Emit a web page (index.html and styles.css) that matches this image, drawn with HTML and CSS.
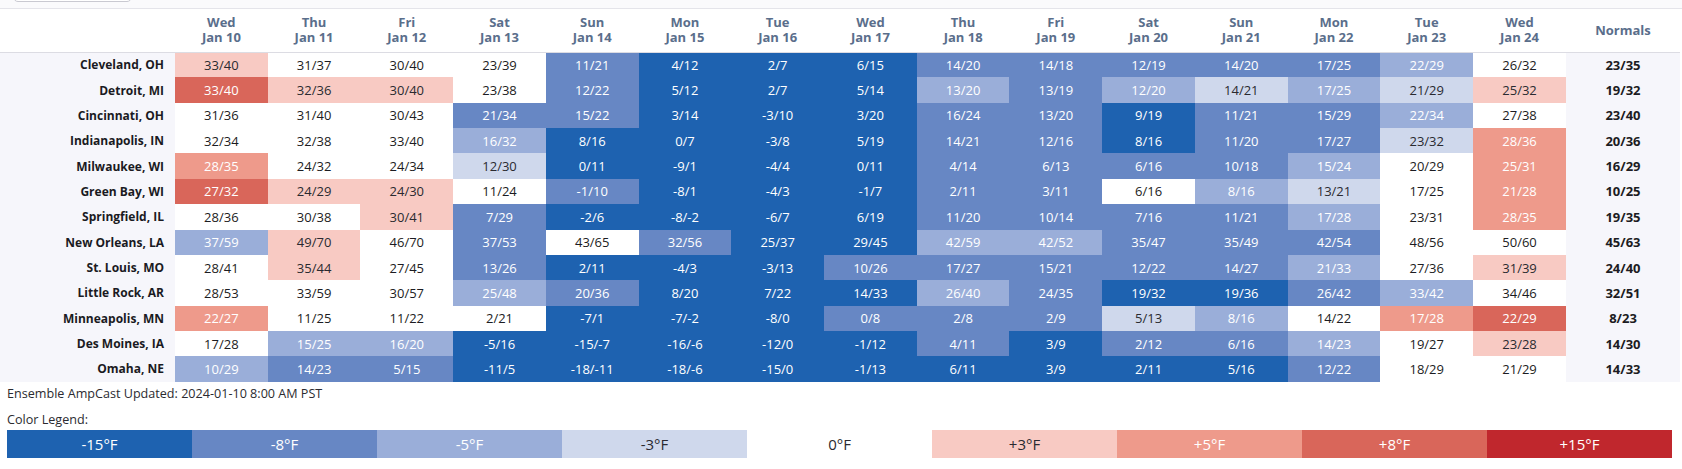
FILE: index.html
```html
<!DOCTYPE html>
<html lang="en">
<head>
<meta charset="utf-8">
<title>Ensemble AmpCast</title>
<link rel="stylesheet" href="styles.css">
</head>
<body>
<div class="toolbar"><div class="select"></div></div>
<table class="grid">
  <colgroup><col class="c-label"><col span="15"><col class="c-norm"></colgroup>
  <thead>
    <tr>
      <th></th>
      <th>Wed<br>Jan 10</th><th>Thu<br>Jan 11</th><th>Fri<br>Jan 12</th><th>Sat<br>Jan 13</th><th>Sun<br>Jan 14</th>
      <th>Mon<br>Jan 15</th><th>Tue<br>Jan 16</th><th>Wed<br>Jan 17</th><th>Thu<br>Jan 18</th><th>Fri<br>Jan 19</th>
      <th>Sat<br>Jan 20</th><th>Sun<br>Jan 21</th><th>Mon<br>Jan 22</th><th>Tue<br>Jan 23</th><th>Wed<br>Jan 24</th>
      <th>Normals</th>
    </tr>
  </thead>
  <tbody>
    <tr><th>Cleveland, OH</th>
      <td class="p3">33/40</td><td>31/37</td><td>30/40</td><td>23/39</td><td class="d8">11/21</td><td class="d15">4/12</td><td class="d15">2/7</td><td class="d15">6/15</td><td class="d8">14/20</td><td class="d8">14/18</td><td class="d8">12/19</td><td class="d8">14/20</td><td class="d8">17/25</td><td class="d5">22/29</td><td>26/32</td>
      <td class="norm">23/35</td></tr>
    <tr><th>Detroit, MI</th>
      <td class="p8">33/40</td><td class="p3">32/36</td><td class="p3">30/40</td><td>23/38</td><td class="d8">12/22</td><td class="d15">5/12</td><td class="d15">2/7</td><td class="d15">5/14</td><td class="d5">13/20</td><td class="d8">13/19</td><td class="d5">12/20</td><td class="d3">14/21</td><td class="d5">17/25</td><td class="d3">21/29</td><td class="p3">25/32</td>
      <td class="norm">19/32</td></tr>
    <tr><th>Cincinnati, OH</th>
      <td>31/36</td><td>31/40</td><td>30/43</td><td class="d8">21/34</td><td class="d8">15/22</td><td class="d15">3/14</td><td class="d15">-3/10</td><td class="d15">3/20</td><td class="d8">16/24</td><td class="d8">13/20</td><td class="d15">9/19</td><td class="d8">11/21</td><td class="d8">15/29</td><td class="d5">22/34</td><td>27/38</td>
      <td class="norm">23/40</td></tr>
    <tr><th>Indianapolis, IN</th>
      <td>32/34</td><td>32/38</td><td>33/40</td><td class="d5">16/32</td><td class="d15">8/16</td><td class="d15">0/7</td><td class="d15">-3/8</td><td class="d15">5/19</td><td class="d8">14/21</td><td class="d8">12/16</td><td class="d15">8/16</td><td class="d8">11/20</td><td class="d8">17/27</td><td class="d3">23/32</td><td class="p5">28/36</td>
      <td class="norm">20/36</td></tr>
    <tr><th>Milwaukee, WI</th>
      <td class="p5">28/35</td><td>24/32</td><td>24/34</td><td class="d3">12/30</td><td class="d15">0/11</td><td class="d15">-9/1</td><td class="d15">-4/4</td><td class="d15">0/11</td><td class="d8">4/14</td><td class="d8">6/13</td><td class="d8">6/16</td><td class="d8">10/18</td><td class="d5">15/24</td><td>20/29</td><td class="p5">25/31</td>
      <td class="norm">16/29</td></tr>
    <tr><th>Green Bay, WI</th>
      <td class="p8">27/32</td><td class="p3">24/29</td><td class="p3">24/30</td><td>11/24</td><td class="d8">-1/10</td><td class="d15">-8/1</td><td class="d15">-4/3</td><td class="d15">-1/7</td><td class="d8">2/11</td><td class="d8">3/11</td><td>6/16</td><td class="d5">8/16</td><td class="d3">13/21</td><td>17/25</td><td class="p5">21/28</td>
      <td class="norm">10/25</td></tr>
    <tr><th>Springfield, IL</th>
      <td>28/36</td><td>30/38</td><td class="p3">30/41</td><td class="d8">7/29</td><td class="d15">-2/6</td><td class="d15">-8/-2</td><td class="d15">-6/7</td><td class="d15">6/19</td><td class="d8">11/20</td><td class="d8">10/14</td><td class="d8">7/16</td><td class="d8">11/21</td><td class="d5">17/28</td><td>23/31</td><td class="p5">28/35</td>
      <td class="norm">19/35</td></tr>
    <tr><th>New Orleans, LA</th>
      <td class="d5">37/59</td><td class="p3">49/70</td><td>46/70</td><td class="d8">37/53</td><td>43/65</td><td class="d8">32/56</td><td class="d15">25/37</td><td class="d15">29/45</td><td class="d5">42/59</td><td class="d5">42/52</td><td class="d8">35/47</td><td class="d8">35/49</td><td class="d8">42/54</td><td>48/56</td><td>50/60</td>
      <td class="norm">45/63</td></tr>
    <tr><th>St. Louis, MO</th>
      <td>28/41</td><td class="p3">35/44</td><td>27/45</td><td class="d8">13/26</td><td class="d15">2/11</td><td class="d15">-4/3</td><td class="d15">-3/13</td><td class="d8">10/26</td><td class="d8">17/27</td><td class="d8">15/21</td><td class="d8">12/22</td><td class="d8">14/27</td><td class="d5">21/33</td><td>27/36</td><td class="p3">31/39</td>
      <td class="norm">24/40</td></tr>
    <tr><th>Little Rock, AR</th>
      <td>28/53</td><td>33/59</td><td>30/57</td><td class="d5">25/48</td><td class="d8">20/36</td><td class="d15">8/20</td><td class="d15">7/22</td><td class="d15">14/33</td><td class="d5">26/40</td><td class="d8">24/35</td><td class="d15">19/32</td><td class="d15">19/36</td><td class="d8">26/42</td><td class="d5">33/42</td><td>34/46</td>
      <td class="norm">32/51</td></tr>
    <tr><th>Minneapolis, MN</th>
      <td class="p5">22/27</td><td>11/25</td><td>11/22</td><td>2/21</td><td class="d15">-7/1</td><td class="d15">-7/-2</td><td class="d15">-8/0</td><td class="d8">0/8</td><td class="d8">2/8</td><td class="d8">2/9</td><td class="d3">5/13</td><td class="d5">8/16</td><td>14/22</td><td class="p5">17/28</td><td class="p8">22/29</td>
      <td class="norm">8/23</td></tr>
    <tr><th>Des Moines, IA</th>
      <td>17/28</td><td class="d5">15/25</td><td class="d5">16/20</td><td class="d15">-5/16</td><td class="d15">-15/-7</td><td class="d15">-16/-6</td><td class="d15">-12/0</td><td class="d15">-1/12</td><td class="d8">4/11</td><td class="d15">3/9</td><td class="d8">2/12</td><td class="d8">6/16</td><td class="d5">14/23</td><td>19/27</td><td class="p3">23/28</td>
      <td class="norm">14/30</td></tr>
    <tr><th>Omaha, NE</th>
      <td class="d5">10/29</td><td class="d8">14/23</td><td class="d8">5/15</td><td class="d15">-11/5</td><td class="d15">-18/-11</td><td class="d15">-18/-6</td><td class="d15">-15/0</td><td class="d15">-1/13</td><td class="d15">6/11</td><td class="d15">3/9</td><td class="d15">2/11</td><td class="d15">5/16</td><td class="d8">12/22</td><td>18/29</td><td>21/29</td>
      <td class="norm">14/33</td></tr>
  </tbody>
</table>
<div class="footer">
  <p class="updated">Ensemble AmpCast Updated: 2024-01-10 8:00 AM PST</p>
  <p class="legend-title">Color Legend:</p>
  <div class="legend">
    <div class="seg d15">-15°F</div>
    <div class="seg d8">-8°F</div>
    <div class="seg d5">-5°F</div>
    <div class="seg d3">-3°F</div>
    <div class="seg zero">0°F</div>
    <div class="seg p3">+3°F</div>
    <div class="seg p5">+5°F</div>
    <div class="seg p8">+8°F</div>
    <div class="seg p15">+15°F</div>
  </div>
</div>
</body>
</html>
```
FILE: styles.css
```css
* { box-sizing: border-box; }
html, body { margin: 0; padding: 0; background: #ffffff; }
body {
  font-family: "Open Sans", "Noto Sans", sans-serif;
  color: #1e1e24;
  width: 1682px;
}
.toolbar {
  height: 9px;
  overflow: hidden;
  background: #fafafc;
  border-bottom: 1px solid #e4e4ea;
}
.select {
  margin-top: -30px;
  margin-left: 13px;
  width: 119px;
  height: 32px;
  border: 1px solid #c9c9d1;
  border-radius: 5px;
  background: #ffffff;
}
.grid {
  width: 1680px;
  table-layout: fixed;
  border-collapse: collapse;
  border-spacing: 0;
}
.c-label { width: 175px; }
.c-norm { width: 114px; }
.grid thead th {
  height: 43px;
  padding: 0;
  font-size: 13px;
  line-height: 15px;
  font-weight: 700;
  color: #5a6e8b;
  text-align: center;
  background: #ffffff;
  border-bottom: 1px solid #dcdce3;
}
.grid tbody tr { height: 25.36px; }
.grid tbody th {
  padding: 0 11px 0 0;
  text-align: right;
  font-size: 12px;
  font-weight: 700;
  color: #1a1a22;
  background: #f6f6fb;
  white-space: nowrap;
}
.grid td {
  padding: 0;
  text-align: center;
  font-size: 13px;
  color: #1c1c22;
  background: #ffffff;
}
.grid td.norm {
  font-weight: 700;
  background: #f6f6fb;
  color: #1c1c22;
}
.d15 { background: #1e62b0 !important; color: #ffffff !important; }
.d8  { background: #6787c4 !important; color: #ffffff !important; }
.d5  { background: #9aaed9 !important; color: #ffffff !important; }
.d3  { background: #cfd8ec !important; color: #2a2a30 !important; }
.p3  { background: #f8cac3 !important; color: #2a2a30 !important; }
.p5  { background: #ee9a8b !important; color: #ffffff !important; }
.p8  { background: #d9665a !important; color: #ffffff !important; }
.p15 { background: #c0272d !important; color: #ffffff !important; }
.footer {
  padding: 0 7px;
}
.updated, .legend-title {
  margin: 0;
  font-size: 12.6px;
  line-height: 20px;
  color: #2b2b30;
}
.updated { padding-top: 2px; }
.legend-title { margin-top: 6px; }
.legend {
  display: flex;
  margin-top: 0;
}
.seg {
  width: 185px;
  height: 28px;
  display: flex;
  align-items: center;
  justify-content: center;
  font-size: 15px;
}
.zero { background: #ffffff; color: #2a2a30; }
```
